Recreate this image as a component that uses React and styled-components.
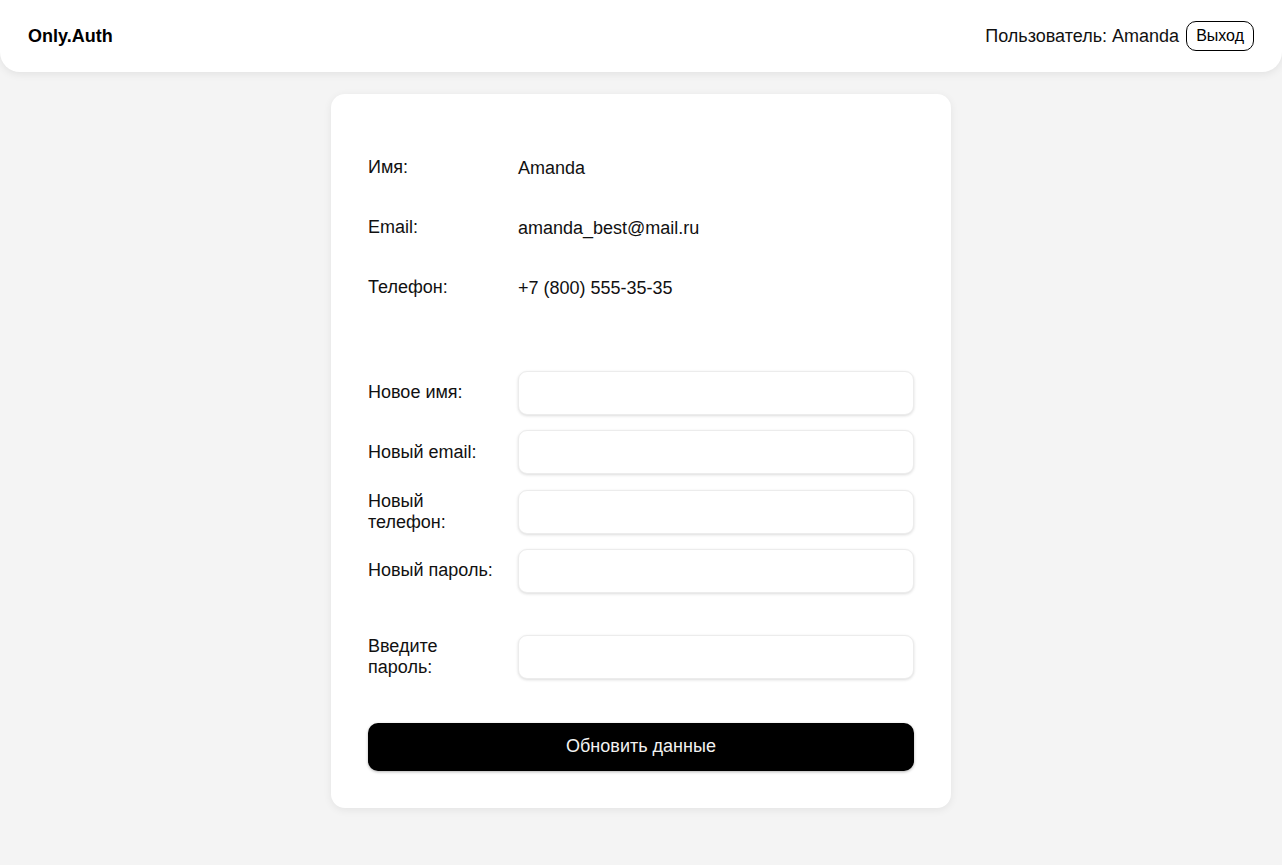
import React from "react";
import styled, { createGlobalStyle } from "styled-components";

const GlobalStyle = createGlobalStyle`
  * {
    box-sizing: border-box;
  }
  body {
    margin: 0;
    background-color: #f4f4f4;
    font-family: "Liberation Sans", Arial, sans-serif;
    color: #111;
  }
`;

// Header
const Header = styled.header`
  height: 72px;
  padding: 0 28px;
  display: flex;
  justify-content: space-between;
  align-items: center;
  background-color: #fff;
  border-radius: 0 0 20px 20px;
  box-shadow: 0 2px 8px rgba(0, 0, 0, 0.08);
`;
const Logo = styled.div`
  font-size: 18px;
  font-weight: 700;
  color: #000;
`;
const UserBox = styled.div`
  display: flex;
  align-items: center;
  gap: 7px;
  font-size: 18px;
`;
const ExitButton = styled.button`
  height: 30px;
  padding: 0 9px;
  font-family: inherit;
  font-size: 16px;
  color: #000;
  background: #fff;
  border: 1px solid #000;
  border-radius: 10px;
  cursor: pointer;
`;

// Card
const Main = styled.main`
  display: flex;
  justify-content: center;
  padding: 22px 0 56px;
`;
const Card = styled.section`
  width: 620px;
  padding: 44px 37px 37px;
  background-color: #fff;
  border-radius: 14px;
  box-shadow: 0 2px 8px rgba(0, 0, 0, 0.07);
`;
const Row = styled.div`
  display: grid;
  grid-template-columns: 132px 1fr;
  column-gap: 18px;
  align-items: center;
  min-height: ${(p) => (p.$info ? "60px" : "44px")};
  margin-bottom: ${(p) => p.$mb || 0}px;
  font-size: 18px;
`;
const Label = styled.label`
  line-height: 1.17;
`;
const Value = styled.span``;
const Input = styled.input`
  width: 100%;
  height: 44px;
  padding: 0 12px;
  font-family: inherit;
  font-size: 16px;
  border: 1px solid #ececec;
  border-radius: 9px;
  box-shadow: 0 1px 3px rgba(0, 0, 0, 0.14);
  outline: none;
`;
const SubmitButton = styled.button`
  width: 100%;
  height: 48px;
  margin-top: 44px;
  font-family: inherit;
  font-size: 18px;
  color: #f2f2f2;
  background-color: #000;
  border: none;
  border-radius: 10px;
  box-shadow: 0 1px 3px rgba(0, 0, 0, 0.3);
  cursor: pointer;
`;

const info = [
  { label: "Имя:", value: "Amanda" },
  { label: "Email:", value: "amanda_best@mail.ru" },
  { label: "Телефон:", value: "+7 (800) 555-35-35" },
];

const fields = [
  { id: "name", label: "Новое имя:", type: "text" },
  { id: "email", label: "Новый email:", type: "email" },
  { id: "phone", label: "Новый телефон:", type: "tel" },
  { id: "password", label: "Новый пароль:", type: "password" },
];

export default function App() {
  return (
    <>
      <GlobalStyle />
      <Header>
        <Logo>Only.Auth</Logo>
        <UserBox>
          <span>Пользователь: Amanda</span>
          <ExitButton>Выход</ExitButton>
        </UserBox>
      </Header>
      <Main>
        <Card>
          {info.map((item, i) => (
            <Row $info key={item.label} $mb={i === info.length - 1 ? 53 : 0}>
              <Label>{item.label}</Label>
              <Value>{item.value}</Value>
            </Row>
          ))}
          <form onSubmit={(e) => e.preventDefault()}>
            {fields.map((f, i) => (
              <Row key={f.id} $mb={i === fields.length - 1 ? 42 : 15.3}>
                <Label htmlFor={f.id}>{f.label}</Label>
                <Input id={f.id} type={f.type} />
              </Row>
            ))}
            <Row>
              <Label htmlFor="current">Введите пароль:</Label>
              <Input id="current" type="password" />
            </Row>
            <SubmitButton type="submit">Обновить данные</SubmitButton>
          </form>
        </Card>
      </Main>
    </>
  );
}
